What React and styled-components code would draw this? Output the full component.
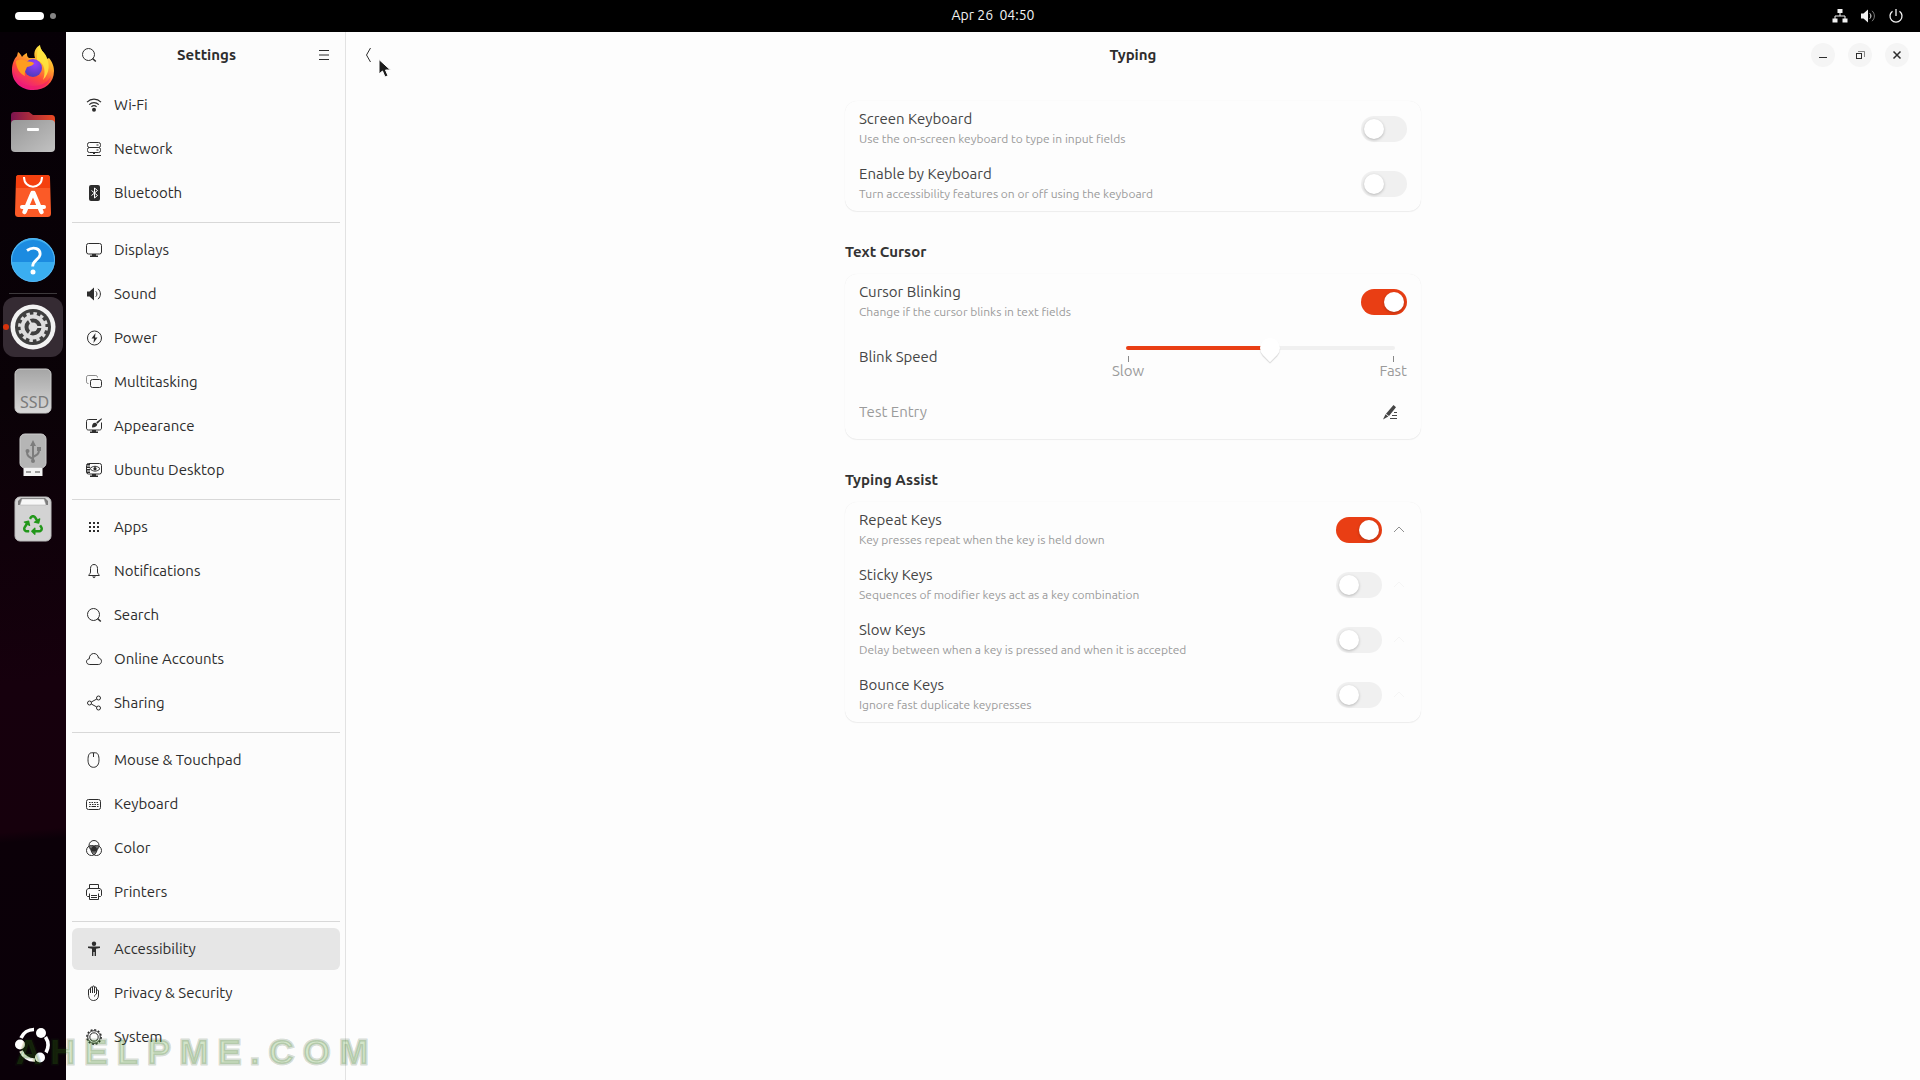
import React, { useState } from 'react'
import styled, { createGlobalStyle, css } from 'styled-components'
import { FaRecycle } from 'react-icons/fa'

const colors = {
  accent: '#e93e14',
  text: '#2d2d2d',
  rowText: '#454545',
  dim: '#9b9b9b',
  sidebar: '#fcfcfc',
  view: '#fdfdfd',
  line: '#d8d8d8',
  track: '#f0f0f0',
}

const GlobalStyle = createGlobalStyle`
  * {
    box-sizing: border-box;
  }
  body {
    margin: 0;
    background: #000;
    color: ${colors.text};
    font-family: Ubuntu, 'Noto Sans', sans-serif;
    font-size: 15px;
    line-height: 20px;
  }
  button,
  input {
    font: inherit;
    color: inherit;
  }
`

const Desktop = styled.div`
  position: relative;
  display: flex;
  flex-direction: column;
  min-height: 100vh;
  overflow: hidden;
`

/* Top bar */
const TopBar = styled.header`
  display: grid;
  grid-template-columns: 66px 1fr;
  align-items: center;
  height: 32px;
  background: #000;
  color: #f2f2f2;
  font-size: 14px;
`
const Workspaces = styled.button`
  display: flex;
  align-items: center;
  gap: 6px;
  padding: 0 0 0 15px;
  border: 0;
  background: none;
`
const WorkspaceMark = styled.span`
  width: ${(props) => (props.$active ? 29 : 6)}px;
  height: ${(props) => (props.$active ? 8 : 6)}px;
  border-radius: 4px;
  background: ${(props) => (props.$active ? '#fff' : '#858585')};
`
const TopBarMain = styled.div`
  display: grid;
  grid-template-columns: 1fr auto 1fr;
  align-items: center;
`
const Clock = styled.time`
  grid-column: 2;
  padding-bottom: 2px;
  white-space: pre;
`
const Tray = styled.div`
  display: flex;
  justify-content: flex-end;
  gap: 12px;
  padding-right: 16px;
  svg {
    display: block;
  }
`

const Workarea = styled.div`
  display: flex;
  flex: 1;
`

/* Dock */
const DockBar = styled.nav`
  display: flex;
  flex-direction: column;
  align-items: center;
  width: 66px;
  padding: 4px 0 3px;
  background: linear-gradient(175deg, #060006 0%, #0a0207 35%, #16000d 62%, #16000c 76%, #0b0008 77%, #0a0008 100%);
`
const DockItem = styled.button`
  position: relative;
  display: grid;
  place-items: center;
  width: 60px;
  height: 60px;
  margin: 2px 0;
  padding: 0;
  border: 0;
  border-radius: 12px;
  background: ${(props) => (props.$active ? '#352b33' : 'none')};
  ${(props) =>
    props.$active &&
    css`
      &::before {
        content: '';
        position: absolute;
        left: 0;
        width: 6px;
        height: 6px;
        border-radius: 50%;
        background: #d8330d;
      }
    `}
`
const DockLine = styled.hr`
  width: 48px;
  height: 1px;
  margin: 1px 0;
  border: 0;
  background: #3d393c;
`
const DockSpacer = styled.div`
  flex: 1;
`

/* Sidebar */
const Sidebar = styled.aside`
  width: 280px;
  border-right: 1px solid #e2e2e2;
  background: ${colors.sidebar};
`
const HeaderBar = styled.div`
  display: grid;
  grid-template-columns: 1fr auto 1fr;
  align-items: center;
  height: 46px;
  padding: 0 ${(props) => (props.$narrow ? 9 : 11)}px 0 11px;
`
const Title = styled.h1`
  margin: 0;
  font-size: 15px;
  font-weight: 700;
`
const IconButton = styled.button`
  display: grid;
  place-items: center;
  width: 24px;
  height: 24px;
  padding: 0;
  border: 0;
  border-radius: 50%;
  background: ${(props) => (props.$round ? '#f5f5f5' : 'none')};
`
const EditButton = styled(IconButton)`
  width: 34px;
  height: 34px;
`
const ButtonGroup = styled.div`
  display: flex;
  justify-content: flex-end;
  gap: 13px;
  grid-column: 3;
`
const NavList = styled.nav`
  display: flex;
  flex-direction: column;
  padding: 5px 5px 0 6px;
`
const NavLine = styled.hr`
  width: 100%;
  height: 1px;
  margin: 7px 0 5px;
  border: 0;
  background: ${colors.line};
`
const NavLink = styled.a`
  display: flex;
  align-items: center;
  gap: 12px;
  height: 42px;
  margin: 1px 0;
  padding: 0 14px;
  border-radius: 6px;
  color: inherit;
  text-decoration: none;
  background: ${(props) => (props.$active ? '#e6e6e6' : 'none')};
`

/* Content */
const View = styled.main`
  flex: 1;
  background: ${colors.view};
`
const Clamp = styled.div`
  width: 100%;
  max-width: 576px;
  margin: 0 auto;
  padding: 23px 0;
`
const Heading = styled.h2`
  margin: 31px 0 12px;
  font-size: 15px;
  font-weight: 700;
  line-height: 20px;
  color: #333;
`
const Card = styled.section`
  border-radius: 12px;
  background: #fdfdfd;
  box-shadow: 0 1px 1px rgba(0, 0, 0, 0.06), 0 0 1px rgba(0, 0, 0, 0.08);
`
const Row = styled.div`
  display: flex;
  align-items: center;
  min-height: 55px;
  padding: 0 14px;
  color: ${colors.rowText};
`
const RowLabel = styled.label`
  flex: 1;
`
const Subtitle = styled.span`
  display: block;
  font-size: 12px;
  color: ${colors.dim};
`
const Toggle = styled.input`
  appearance: none;
  width: 46px;
  height: 26px;
  margin: 0;
  padding: 3px;
  border-radius: 13px;
  background: ${colors.track};
  &::before {
    content: '';
    display: block;
    width: 20px;
    height: 20px;
    border-radius: 50%;
    background: #fff;
    box-shadow: 0 1px 3px rgba(0, 0, 0, 0.25);
  }
  &:checked {
    background: ${colors.accent};
  }
  &:checked::before {
    margin-left: 20px;
  }
`
const Expander = styled.button`
  display: grid;
  place-items: center;
  width: 16px;
  height: 16px;
  margin-left: 9px;
  padding: 0;
  border: 0;
  background: none;
  color: ${(props) => (props.disabled ? '#f5f5f5' : '#8f8f8f')};
`
const Scale = styled.div`
  width: 295px;
  padding: 11px 0 4px;
`
const Range = styled.input`
  appearance: none;
  display: block;
  width: 269px;
  height: 16px;
  margin: 0 12px 0 14px;
  background: none;
  &::-webkit-slider-runnable-track {
    height: 4px;
    border-radius: 2px;
    background: linear-gradient(to right, ${colors.accent} 54%, ${colors.track} 54%);
  }
  &::-webkit-slider-thumb {
    appearance: none;
    width: 20px;
    height: 20px;
    margin-top: -8px;
    border-radius: 50% 50% 0 50%;
    background: #fff;
    box-shadow: 1px 1px 1px rgba(0, 0, 0, 0.15);
    transform: rotate(45deg);
  }
`
const Marks = styled.div`
  display: flex;
  justify-content: space-between;
  color: ${colors.dim};
`
const Mark = styled.span`
  line-height: 18px;
  &::before {
    content: '';
    display: block;
    width: 1px;
    height: 6px;
    margin: 0 auto;
    background: #888;
  }
`
const Entry = styled.input`
  flex: 1;
  padding: 0;
  border: 0;
  outline: 0;
  background: none;
  &::placeholder {
    color: ${colors.dim};
    opacity: 1;
  }
`

/* Overlays */
const Pointer = styled.svg`
  position: absolute;
  left: 377px;
  top: 58px;
`
const Watermark = styled.div`
  position: absolute;
  left: 16px;
  bottom: 9px;
  font-family: 'Liberation Sans', sans-serif;
  font-size: 35px;
  font-weight: 700;
  line-height: 38px;
  letter-spacing: 9px;
  color: rgba(60, 150, 20, 0.24);
  -webkit-text-stroke: 3px rgba(20, 60, 10, 0.18);
  pointer-events: none;
`

const Svg = ({ children, size = 16 }) => (
  <svg width={size} height={size} viewBox="0 0 16 16" fill="none" stroke="currentColor" aria-hidden="true">
    {children}
  </svg>
)

const solid = { fill: 'currentColor', stroke: 'none' }

const monitor = (
  <>
    <rect x="0.5" y="1.5" width="15" height="10.5" rx="2" />
    <path d="M6 12h4v1.500h2V15H4v-1.500h2z" {...solid} />
  </>
)

const icons = {
  wifi: (
    <>
      <path d="M1 5.200C5 1.200 11 1.200 15 5.200M3.200 7.600c2.800-2.700 6.800-2.700 9.600 0M5.400 9.800c1.500-1.400 3.700-1.400 5.200 0" strokeWidth="1.200" />
      <circle cx="8" cy="12.700" r="2" {...solid} />
    </>
  ),
  network: (
    <>
      <rect x="1.500" y="1.500" width="13" height="5" rx="2" />
      <rect x="1.500" y="6.500" width="13" height="5" rx="2" />
      <path d="M10.500 4h2M10.500 9h2M1 14.500h14M7 12.500h2" />
    </>
  ),
  bluetooth: (
    <>
      <rect x="3" y="0" width="11" height="16" rx="2" {...solid} />
      <path d="M5.500 5.500l6 5L8.500 13V3l3 2.500-6 5" stroke="#fff" />
    </>
  ),
  displays: monitor,
  sound: (
    <>
      <path d="M1 5.500h2.500L8 1.500v13l-4.500-4H1z" {...solid} />
      <path d="M9.800 5.300c1.500 1.500 1.500 3.900 0 5.400" />
      <path d="M12 2.800c3.200 3 3.200 7.400 0 10.400" />
    </>
  ),
  power: (
    <>
      <circle cx="8.500" cy="8" r="7" />
      <path d="M9.500 3L5.500 8.600h2.500L7.500 13l4-5.600H9z" {...solid} />
    </>
  ),
  multitasking: (
    <>
      <path d="M2.500 9.500C1.200 9.500.5 9 .5 7.500v-4c0-1.300.7-2 2-2h7c1.300 0 2 .7 2 2" opacity="0.55" />
      <rect x="4.500" y="5.500" width="11" height="8" rx="2" />
    </>
  ),
  appearance: (
    <>
      <path d="M11 1.500H2.500c-1.300 0-2 .7-2 2V10c0 1.300.7 2 2 2h11c1.300 0 2-.7 2-2V4.500" />
      <path d="M6 12h4v1.500h2V15H4v-1.500h2z" {...solid} />
      <path d="M15.500.2L10.200 4.300l1.300 1.500L16 1zM9.500 4.800c-2.500-.3-3.500 1.800-3.500 4.700 3.500 0 5.300-1 5.200-3.400z" {...solid} />
    </>
  ),
  desktop: (
    <>
      {monitor}
      <path d="M2.500 2v10" strokeWidth="3" strokeDasharray="1.500 1" />
      <path d="M4 6.700c2.600-3.200 7.400-3.200 10 0-2.600 3.200-7.400 3.200-10 0z" />
      <circle cx="9" cy="6.700" r="1.600" {...solid} />
    </>
  ),
  apps: (
    <path d="M3 3h2v2H3zM7 3h2v2H7zM11 3h2v2h-2zM3 7h2v2H3zM7 7h2v2H7zM11 7h2v2h-2zM3 11h2v2H3zM7 11h2v2H7zM11 11h2v2h-2z" {...solid} />
  ),
  bell: (
    <>
      <path d="M4.500 9V5.500c0-2.500 1.500-4 3.500-4s3.500 1.500 3.500 4V9c0 1.500 1.300 2 1.800 3.500H2.700C3.200 11 4.500 10.500 4.500 9z" />
      <path d="M6 13.500h4L8 15.300z" {...solid} />
    </>
  ),
  search: (
    <>
      <circle cx="7.500" cy="7.500" r="6" />
      <path d="M11.500 11.500l3.300 3" strokeWidth="1.600" />
    </>
  ),
  cloud: (
    <path d="M3.800 13.500c-4.300 0-4.300-5.300-.6-5.500 0-7 8.500-7.300 9.300-1 4 .2 4 6.500-.2 6.500z" />
  ),
  share: (
    <>
      <circle cx="3.500" cy="8" r="2" />
      <circle cx="12.500" cy="3" r="2" />
      <circle cx="12.500" cy="13" r="2" />
      <path d="M5.300 7l5.500-3M5.300 9l5.500 3" />
    </>
  ),
  mouse: (
    <>
      <path d="M5.500.800h4c2.500 0 3.500 3 3.500 7s-1.500 7.500-5.500 7.500-5.500-3.500-5.500-7.500 1-7 3.500-7z" />
      <path d="M7.500 1v4" />
    </>
  ),
  keyboard: (
    <>
      <rect x="0.500" y="3.500" width="14" height="10" rx="2" />
      <path d="M3 6.500h10" strokeDasharray="1.500 1" />
      <path d="M3.500 8.500h9" strokeDasharray="1.500 1" />
      <path d="M3 10.500h1.500M5.500 10.500h4.500M11 10.500h1.500" />
    </>
  ),
  color: (
    <>
      <path d="M3.500 6.500c2-1.500 7-1.500 9 0 0 3.500-1.500 6-4.500 7.500-3-1.500-4.500-4-4.500-7.500z" fill="#6b6b6b" stroke="none" />
      <circle cx="8" cy="5.500" r="5" />
      <circle cx="5.500" cy="10.500" r="5" />
      <circle cx="10.500" cy="10.500" r="5" />
      <circle cx="8" cy="9" r="2.500" {...solid} />
    </>
  ),
  printer: (
    <>
      <path d="M3.500 4V.5h9V4M3 12.500H1.500l-1-1V7C.5 5.500 1.500 4.500 3 4.500h10c1.500 0 2.500 1 2.500 2.500v4.500l-1 1H13M3.500 9.500v6h9v-6M5 11.500h6M5 13.500h6" />
      <path d="M12.500 6.500H14" />
    </>
  ),
  accessibility: (
    <>
      <circle cx="8" cy="2.800" r="2.200" {...solid} />
      <path d="M2 5.500h12V7l-4 .8V15H8.600v-4H7.400v4H6V7.800L2 7z" {...solid} />
    </>
  ),
  hand: (
    <>
      <path d="M2.500 9V5c0-1.300 2-1.300 2 0v3-5c0-1.300 2-1.300 2 0v5-6c0-1.400 2-1.400 2 0v6-5c0-1.300 2-1.300 2 0v6V6c0-1.400 2-1.400 2 0v4c0 3.500-1.800 5.500-5 5.500s-5-2.500-5-6.500z" />
      <path d="M10.500 9c-1.300.500-2 1.300-2 2.500" />
    </>
  ),
  gear: (
    <>
      <circle cx="8" cy="8" r="6.300" />
      <circle cx="8" cy="8" r="4.200" />
      <circle cx="8" cy="8" r="7.200" strokeWidth="1.400" strokeDasharray="2 1.770" />
    </>
  ),
}

const navGroups = [
  [
    ['wifi', 'Wi-Fi'],
    ['network', 'Network'],
    ['bluetooth', 'Bluetooth'],
  ],
  [
    ['displays', 'Displays'],
    ['sound', 'Sound'],
    ['power', 'Power'],
    ['multitasking', 'Multitasking'],
    ['appearance', 'Appearance'],
    ['desktop', 'Ubuntu Desktop'],
  ],
  [
    ['apps', 'Apps'],
    ['bell', 'Notifications'],
    ['search', 'Search'],
    ['cloud', 'Online Accounts'],
    ['share', 'Sharing'],
  ],
  [
    ['mouse', 'Mouse & Touchpad'],
    ['keyboard', 'Keyboard'],
    ['color', 'Color'],
    ['printer', 'Printers'],
  ],
  [
    ['accessibility', 'Accessibility'],
    ['hand', 'Privacy & Security'],
    ['gear', 'System'],
  ],
]

const FirefoxIcon = () => (
  <svg width="44" height="46" viewBox="0 1 44 46">
    <defs>
      <linearGradient id="fx-body" x1="0.800" y1="0" x2="0.300" y2="1">
        <stop offset="0" stopColor="#fff44f" />
        <stop offset="0.350" stopColor="#ffb02a" />
        <stop offset="0.650" stopColor="#ff4b3a" />
        <stop offset="1" stopColor="#e8128f" />
      </linearGradient>
      <radialGradient id="fx-globe" cx="0.600" cy="0.250" r="0.800">
        <stop offset="0" stopColor="#9a3dff" />
        <stop offset="1" stopColor="#4a3bb8" />
      </radialGradient>
    </defs>
    <path d="M1 26C1 20 3 15 6 12l1-4c2 1 3 3 4 5 1-2 3-3 5-4 0 2 0 4 2 5h6c-2-6 1-11 5-13 0 5 4 7 6 11l1 3 2-1c4 5 5 9 5 13 0 12-9 19-21 19S1 38 1 26z" fill="url(#fx-body)" />
    <path d="M26 12c0-5 1-8 3-11 0 5 4 7 6 11 4 7 4 17-3 24 3-8 2-17-6-20z" fill="#ffe83f" opacity="0.850" />
    <circle cx="22" cy="24" r="9" fill="url(#fx-globe)" />
    <path d="M5 17c3-2 7-2 10 0 3 1 5 0 8 2-1 3-4 3-7 4-1 3-3 5-2 9-5-2-9-8-9-15z" fill="#ff9d1e" />
    <path d="M2 24c2 11 9 18 20 18 9 0 15-4 18-10-2 9-9 13-18 13C11 45 2 38 2 24z" fill="#f01a6e" opacity="0.600" />
  </svg>
)

const FilesIcon = () => (
  <svg width="46" height="42" viewBox="0 0 46 42">
    <defs>
      <linearGradient id="files-back" x1="0" x2="1">
        <stop offset="0" stopColor="#7b1450" />
        <stop offset="1" stopColor="#ea4a22" />
      </linearGradient>
      <linearGradient id="files-front" x1="0" y1="0" x2="1" y2="1">
        <stop offset="0" stopColor="#969696" />
        <stop offset="1" stopColor="#c2c2c2" />
      </linearGradient>
    </defs>
    <path d="M1 5c0-3 1-4 4-4h14l4 3h18c3 0 4 1 4 4v14H1z" fill="url(#files-back)" />
    <rect x="1" y="9" width="44" height="32" rx="4" fill="url(#files-front)" />
    <rect x="17" y="17" width="12" height="3" rx="1" fill="#fff" />
  </svg>
)

const StoreIcon = () => (
  <svg width="38" height="44" viewBox="0 0 38 44">
    <path d="M5 1h28c2 0 3 1 3 3l1 35c0 3-1 4-4 4H5c-3 0-4-1-4-4L2 4c0-2 1-3 3-3z" fill="#fb5a27" />
    <path d="M5 1h28c2 0 3 1 3 3v10H2V4c0-2 1-3 3-3z" fill="#f4400f" />
    <path d="M10 3c0 13 18 13 18 0" fill="none" stroke="#fff" strokeWidth="2" />
    <path d="M18.500 19L10.500 38M19.500 19l8 19" stroke="#fff" strokeWidth="4.500" strokeLinecap="round" />
    <path d="M8 33h22" stroke="#fff" strokeWidth="4" strokeLinecap="round" />
  </svg>
)

const HelpIcon = () => (
  <svg width="46" height="46" viewBox="0 0 46 46">
    <circle cx="23" cy="23" r="22" fill="#3aaef0" />
    <path d="M1 25a22 22 0 1 1 44 0z" fill="#1c8be0" />
    <circle cx="23" cy="23" r="21.500" fill="none" stroke="#55b5f2" />
    <path d="M17 13.500c7-5 14-1.500 13 4.500-.8 4.500-7.500 5.500-7.300 11.500" fill="none" stroke="#fff" strokeWidth="2.800" />
    <circle cx="23" cy="35" r="2.500" fill="#fff" />
  </svg>
)

const SettingsIcon = () => (
  <svg width="46" height="46" viewBox="0 0 46 46" fill="none">
    <circle cx="23" cy="23" r="22.500" fill="#f2f2f2" />
    <circle cx="23" cy="23" r="18" fill="#3f3f3f" />
    <circle cx="23" cy="23" r="13.500" stroke="#dedede" strokeWidth="3" strokeDasharray="3.500 3.570" />
    <circle cx="23" cy="23" r="10.500" stroke="#dedede" strokeWidth="4" />
    <circle cx="23" cy="23" r="4.500" fill="#dedede" />
    <path d="M23 23h10M23 23l-5-9M23 23l-5 9" stroke="#dedede" strokeWidth="2" />
  </svg>
)

const SsdIcon = () => (
  <svg width="38" height="46" viewBox="0 0 38 46">
    <defs>
      <linearGradient id="ssd" x1="0" y1="0" x2="0" y2="1">
        <stop offset="0" stopColor="#a5a5a5" />
        <stop offset="1" stopColor="#d8d8d8" />
      </linearGradient>
    </defs>
    <rect x="1" y="1" width="36" height="44" rx="5" fill="url(#ssd)" stroke="#c9c9c9" />
    <text x="6" y="40" fontSize="16" fontFamily="Noto Sans, sans-serif" fill="#7b7b7b">
      SSD
    </text>
  </svg>
)

const UsbIcon = () => (
  <svg width="28" height="44" viewBox="0 0 28 44" fill="none">
    <rect x="1" y="1" width="26" height="34" rx="5" fill="#b5b5b5" stroke="#cdcdcd" />
    <path d="M4.500 35h19v8h-19z" fill="#f4f4f4" />
    <path d="M7 38h5v2H7zM16 38h5v2h-5z" fill="#9e9e9e" />
    <path d="M14 28V11M14 26c-4-2-6-3-6-7M14 24c4-2 6-3 6-7" stroke="#7d7d7d" strokeWidth="2" />
    <path d="M14 7l3 6h-6zM18 14h4v4h-4z" fill="#7d7d7d" />
    <circle cx="8.500" cy="18" r="2" fill="#7d7d7d" />
    <circle cx="14" cy="28" r="2" fill="#7d7d7d" />
  </svg>
)

const TrashIcon = () => (
  <svg width="38" height="46" viewBox="0 0 38 46" fill="none">
    <rect x="1" y="1" width="36" height="44" rx="5" fill="#d3d3d3" stroke="#bdbdbd" />
    <path d="M4 9V5l3-3h24l3 3v4h-3V6l-2-1H9L7 6v3z" fill="#7c7c7c" />
    <path d="M6 9l2-6h22l2 6z" fill="#f7f7f7" stroke="#ababab" strokeWidth="0.500" />
    <FaRecycle x="9" y="19" size={20} color="#22971a" />
  </svg>
)

const UbuntuLogo = () => (
  <svg width="36" height="36" viewBox="0 0 36 36" fill="none">
    <path d="M6 11a14 14 0 0 1 13-8.500M30.500 10a15 15 0 0 1 .5 15.500M20 33A14 14 0 0 1 6 24" stroke="#fff" strokeWidth="3.600" />
    <circle cx="26" cy="6" r="5" fill="#fff" />
    <circle cx="5" cy="17.500" r="5" fill="#fff" />
    <circle cx="25" cy="30.500" r="5" fill="#fff" />
  </svg>
)

const SwitchRow = ({ id, title, subtitle, on = false, expander }) => {
  const [checked, setChecked] = useState(on)
  return (
    <Row>
      <RowLabel htmlFor={id}>
        {title}
        <Subtitle>{subtitle}</Subtitle>
      </RowLabel>
      <Toggle type="checkbox" role="switch" id={id} checked={checked} onChange={() => setChecked(!checked)} />
      {expander && (
        <Expander aria-label={`${title} options`} disabled={!checked}>
          <Svg>
            <path d="M3 10l5-5 5 5" />
          </Svg>
        </Expander>
      )}
    </Row>
  )
}

const Dock = () => (
  <DockBar aria-label="Dock">
    <DockItem aria-label="Firefox">
      <FirefoxIcon />
    </DockItem>
    <DockItem aria-label="Files">
      <FilesIcon />
    </DockItem>
    <DockItem aria-label="App Center">
      <StoreIcon />
    </DockItem>
    <DockItem aria-label="Help">
      <HelpIcon />
    </DockItem>
    <DockLine />
    <DockItem aria-label="Settings" $active>
      <SettingsIcon />
    </DockItem>
    <DockItem aria-label="SSD">
      <SsdIcon />
    </DockItem>
    <DockItem aria-label="USB drive">
      <UsbIcon />
    </DockItem>
    <DockItem aria-label="Trash">
      <TrashIcon />
    </DockItem>
    <DockSpacer />
    <DockItem aria-label="Show Apps">
      <UbuntuLogo />
    </DockItem>
  </DockBar>
)

const App = () => {
  return (
    <Desktop>
      <GlobalStyle />
      <TopBar>
        <Workspaces aria-label="Workspaces">
          <WorkspaceMark $active />
          <WorkspaceMark />
        </Workspaces>
        <TopBarMain>
          <Clock>{'Apr 26  04:50'}</Clock>
          <Tray>
            <Svg>
              <path d="M5.500 1h5v4h-5zM.5 10.500h5v4h-5zM10.500 10.500h5v4h-5z" {...solid} />
              <path d="M8 5v3M3 11V8h10v3" />
            </Svg>
            <Svg>
              <path d="M1 5.500h2.500L8 1.500v13l-4.500-4H1z" {...solid} />
              <path d="M9.800 5.300c1.500 1.500 1.500 3.900 0 5.400" />
              <path d="M12 2.800c3.200 3 3.200 7.400 0 10.400" opacity="0.500" />
            </Svg>
            <Svg>
              <path d="M8 1v7M4.500 3.200a6 6 0 1 0 7 0" strokeWidth="1.300" />
            </Svg>
          </Tray>
        </TopBarMain>
      </TopBar>

      <Workarea>
        <Dock />

        <Sidebar>
          <HeaderBar $narrow>
            <IconButton aria-label="Search">
              <Svg>{icons.search}</Svg>
            </IconButton>
            <Title>Settings</Title>
            <ButtonGroup>
              <IconButton aria-label="Main menu">
                <Svg>
                  <path d="M3 3.500h10M3 8h10M3 12.500h10" />
                </Svg>
              </IconButton>
            </ButtonGroup>
          </HeaderBar>
          <NavList aria-label="Settings panels">
            {navGroups.map((group, index) => (
              <React.Fragment key={index}>
                {index > 0 && <NavLine />}
                {group.map(([icon, name]) => (
                  <NavLink key={name} href="#" $active={name === 'Accessibility'}>
                    <Svg>{icons[icon]}</Svg>
                    {name}
                  </NavLink>
                ))}
              </React.Fragment>
            ))}
          </NavList>
        </Sidebar>

        <View>
          <HeaderBar>
            <IconButton aria-label="Back">
              <Svg>
                <path d="M9.500 1L5.500 8l4 7" />
              </Svg>
            </IconButton>
            <Title>Typing</Title>
            <ButtonGroup>
              <IconButton $round aria-label="Minimize">
                <Svg>
                  <path d="M4 10.500h8" />
                </Svg>
              </IconButton>
              <IconButton $round aria-label="Restore">
                <Svg>
                  <path d="M6 4.500h6.500V10" opacity="0.550" />
                  <rect x="4.500" y="6.500" width="5" height="5" />
                </Svg>
              </IconButton>
              <IconButton $round aria-label="Close">
                <Svg>
                  <path d="M4.500 4.500l7 7M11.500 4.500l-7 7" strokeWidth="1.500" />
                </Svg>
              </IconButton>
            </ButtonGroup>
          </HeaderBar>

          <Clamp>
            <Card>
              <SwitchRow
                id="screen-keyboard"
                title="Screen Keyboard"
                subtitle="Use the on-screen keyboard to type in input fields"
              />
              <SwitchRow
                id="enable-by-keyboard"
                title="Enable by Keyboard"
                subtitle="Turn accessibility features on or off using the keyboard"
              />
            </Card>

            <Heading>Text Cursor</Heading>
            <Card>
              <SwitchRow
                id="cursor-blinking"
                title="Cursor Blinking"
                subtitle="Change if the cursor blinks in text fields"
                on
              />
              <Row>
                <RowLabel htmlFor="blink-speed">Blink Speed</RowLabel>
                <Scale>
                  <Range type="range" id="blink-speed" min="0" max="100" defaultValue="54" />
                  <Marks>
                    <Mark>Slow</Mark>
                    <Mark>Fast</Mark>
                  </Marks>
                </Scale>
              </Row>
              <Row>
                <Entry type="text" aria-label="Test Entry" placeholder="Test Entry" />
                <EditButton aria-label="Edit">
                  <Svg>
                    <path d="M11.500 1l2.500 2.300-7 8.700-3-2.300z" {...solid} />
                    <path d="M3.500 10.200l2.800 2.200L1 15.500z" {...solid} />
                    <path d="M12 8.500h3M10 11.500h5M8 14.500h7" />
                  </Svg>
                </EditButton>
              </Row>
            </Card>

            <Heading>Typing Assist</Heading>
            <Card>
              <SwitchRow
                id="repeat-keys"
                title="Repeat Keys"
                subtitle="Key presses repeat when the key is held down"
                on
                expander
              />
              <SwitchRow
                id="sticky-keys"
                title="Sticky Keys"
                subtitle="Sequences of modifier keys act as a key combination"
                expander
              />
              <SwitchRow
                id="slow-keys"
                title="Slow Keys"
                subtitle="Delay between when a key is pressed and when it is accepted"
                expander
              />
              <SwitchRow
                id="bounce-keys"
                title="Bounce Keys"
                subtitle="Ignore fast duplicate keypresses"
                expander
              />
            </Card>
          </Clamp>
        </View>
      </Workarea>

      <Watermark>AHELPME.COM</Watermark>
      <Pointer width="16" height="22" viewBox="0 0 16 22" aria-hidden="true">
        <path d="M2 1.500v14.500l3.500-3 2.500 6 3-1.200-2.500-5.800h5z" fill="#1c1c1c" stroke="#fff" />
      </Pointer>
    </Desktop>
  )
}

export default App
